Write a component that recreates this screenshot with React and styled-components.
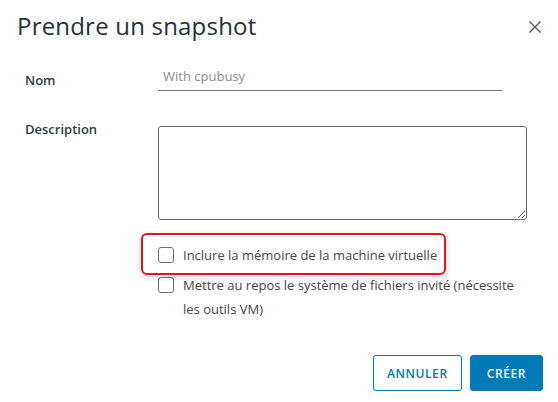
import React from 'react';
import styled, { createGlobalStyle } from 'styled-components';

const GlobalStyle = createGlobalStyle`
  html, body {
    margin: 0;
    padding: 0;
    background: #ffffff;
    font-family: "Open Sans", "Noto Sans", sans-serif;
    color: #313131;
  }
`;

const Modal = styled.div`
  width: 558px;
  height: 402px;
  box-sizing: border-box;
  padding: 11px 15px 0 17px;
  display: flex;
  flex-direction: column;
`;

const Header = styled.div`
  display: flex;
  justify-content: space-between;
  align-items: flex-start;
`;

const Title = styled.h3`
  margin: 0;
  font-size: 24px;
  font-weight: 400;
  line-height: 30px;
  color: #21333b;
  letter-spacing: 0.2px;
`;

const Close = styled.button`
  border: 0;
  background: none;
  padding: 0;
  margin: 9px 1px 0 0;
  width: 14px;
  height: 14px;
  display: flex;
  cursor: pointer;
`;

const Form = styled.div`
  margin-top: 25px;
  padding-left: 8px;
  display: flex;
  flex-direction: column;
`;

const Row = styled.div`
  display: flex;
  align-items: flex-start;
  margin-bottom: ${p => p.gap || 0}px;
`;

const Label = styled.label`
  width: 133px;
  flex-shrink: 0;
  font-size: 13px;
  font-weight: 600;
  color: #2f3b42;
  line-height: 20px;
  padding-top: ${p => p.top || 0}px;
  margin-top: ${p => p.lift || 0}px;
`;

const TextInput = styled.input`
  width: 344px;
  box-sizing: border-box;
  border: 0;
  border-bottom: 1px solid #737373;
  padding: 0 0 4px 5px;
  font-family: inherit;
  font-size: 13px;
  line-height: 20px;
  color: #313131;
  outline: none;
  &::placeholder {
    color: #8b8b8b;
  }
`;

const TextArea = styled.textarea`
  width: 369px;
  height: 94px;
  box-sizing: border-box;
  border: 1px solid #6c6c6c;
  border-radius: 3px;
  margin: 0;
  font-family: inherit;
  resize: vertical;
  outline: none;
`;

const Options = styled.div`
  margin-left: 116px;
  display: flex;
  flex-direction: column;
`;

const Highlight = styled.div`
  border: 2px solid #e8141c;
  border-radius: 6px;
  box-shadow: 0 2px 6px rgba(0, 0, 0, 0.18);
  padding: 8px 10px 6px 15px;
  width: 305px;
  box-sizing: border-box;
  margin-bottom: -2px;
  white-space: nowrap;
`;

const Check = styled.label`
  display: flex;
  align-items: flex-start;
  gap: 9px;
  font-size: 13px;
  line-height: 24px;
  color: #454545;
  padding-left: ${p => (p.inset ? 0 : 17)}px;
`;

const Box = styled.span`
  width: 14px;
  height: 14px;
  border: 1px solid #6b737a;
  border-radius: 3px;
  flex-shrink: 0;
  margin-top: 4px;
`;

const Footer = styled.div`
  margin-top: auto;
  margin-bottom: 11px;
  display: flex;
  justify-content: flex-end;
  gap: 8px;
`;

const Button = styled.button`
  height: 36px;
  box-sizing: border-box;
  padding: 0 ${p => (p.primary ? 16 : 13)}px;
  border-radius: 3px;
  border: 1px solid #0079b8;
  background: ${p => (p.primary ? '#0079b8' : '#ffffff')};
  color: ${p => (p.primary ? '#ffffff' : '#0079b8')};
  font-family: inherit;
  font-size: 12px;
  font-weight: 600;
  letter-spacing: 0.6px;
  cursor: pointer;
`;

export default function App() {
  return (
    <>
      <GlobalStyle />
      <Modal>
        <Header>
          <Title>Prendre un snapshot</Title>
          <Close aria-label="Fermer">
            <svg width="14" height="14" viewBox="0 0 14 14">
              <path d="M1.5 1.5 L12.5 12.5 M12.5 1.5 L1.5 12.5" stroke="#4b5a62" strokeWidth="1.4" />
            </svg>
          </Close>
        </Header>
        <Form>
          <Row gap={35}>
            <Label top={4}>Nom</Label>
            <TextInput placeholder="With cpubusy" />
          </Row>
          <Row gap={13}>
            <Label lift={-7}>Description</Label>
            <TextArea />
          </Row>
          <Options>
            <Highlight>
              <Check inset>
                <Box />
                Inclure la mémoire de la machine virtuelle
              </Check>
            </Highlight>
            <Check>
              <Box />
              <span>
                Mettre au repos le système de fichiers invité (nécessite
                <br />
                les outils VM)
              </span>
            </Check>
          </Options>
        </Form>
        <Footer>
          <Button>ANNULER</Button>
          <Button primary>CRÉER</Button>
        </Footer>
      </Modal>
    </>
  );
}
